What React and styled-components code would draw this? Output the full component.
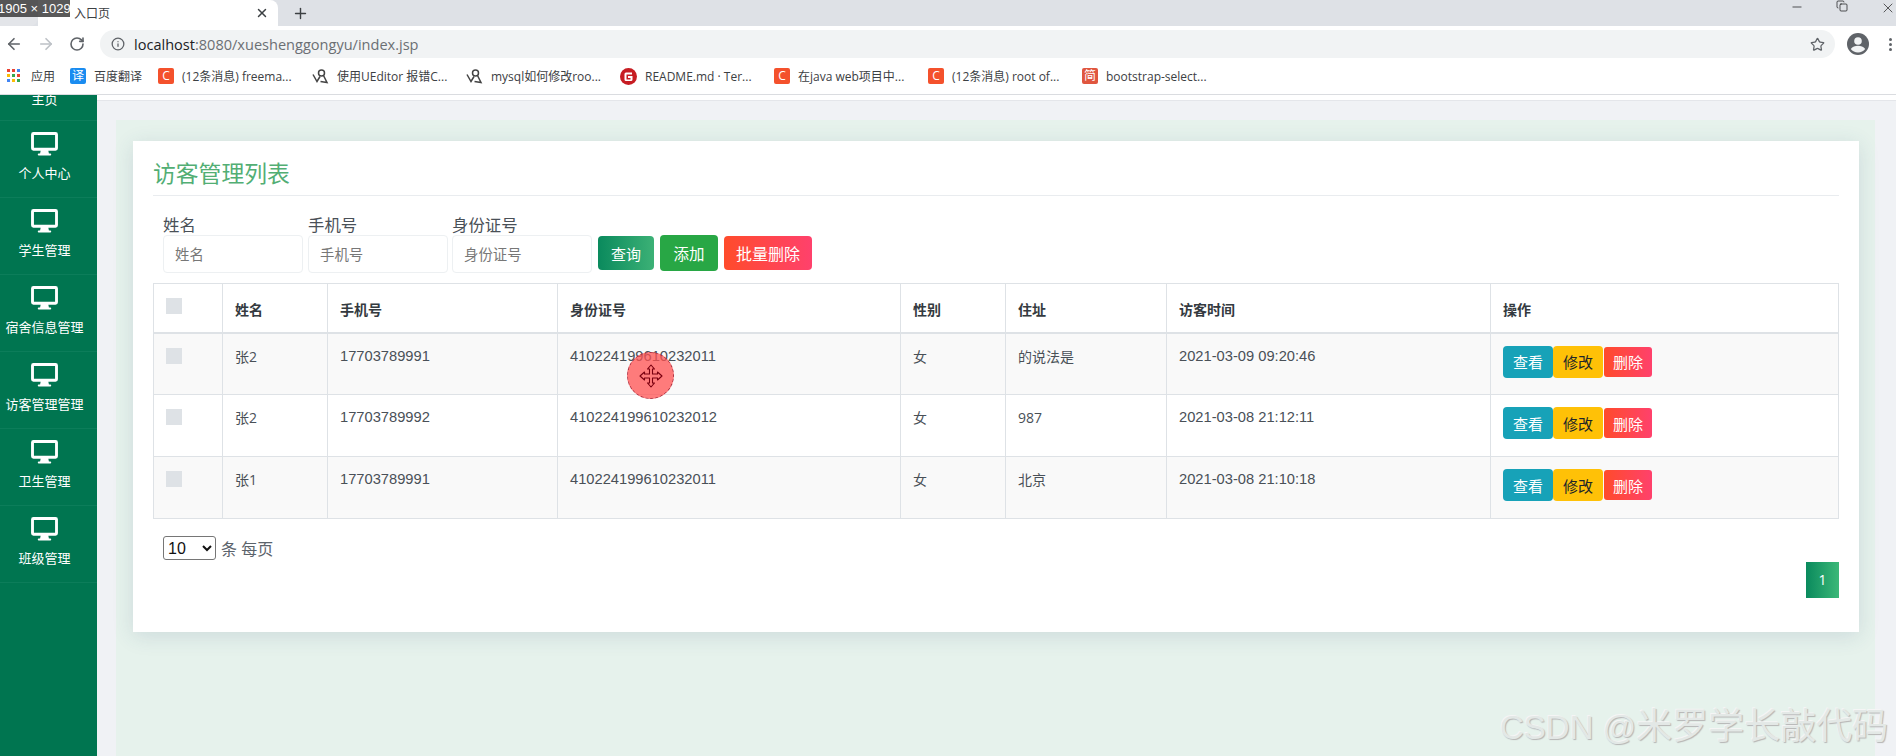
import styled, { createGlobalStyle } from "styled-components";
import { ArrowLeft, ArrowRight, RotateCw, Info, Star, Plus, X, Minus, Copy } from "lucide-react";

const GlobalStyle = createGlobalStyle`
  html, body {
    margin: 0;
    padding: 0;
    height: 756px;
    overflow: hidden;
    background: #f0f2f5;
    font-family: "Open Sans", "Noto Sans CJK SC", sans-serif;
  }
  * { box-sizing: border-box; }
`;

const bookmarks = [
  { kind: "apps", text: "应用" },
  { kind: "yi", text: "百度翻译" },
  { kind: "c", text: "(12条消息) freema..." },
  { kind: "ue", text: "使用UEditor 报错C..." },
  { kind: "ue", text: "mysql如何修改roo..." },
  { kind: "g", text: "README.md · Ter..." },
  { kind: "c", text: "在java web项目中..." },
  { kind: "c", text: "(12条消息) root of..." },
  { kind: "jian", text: "bootstrap-select..." },
];

const menu = ["主页", "个人中心", "学生管理", "宿舍信息管理", "访客管理管理", "卫生管理", "班级管理"];

const rows = [
  { name: "张2", phone: "17703789991", id: "410224199610232011", sex: "女", addr: "的说法是", time: "2021-03-09 09:20:46" },
  { name: "张2", phone: "17703789992", id: "410224199610232012", sex: "女", addr: "987", time: "2021-03-08 21:12:11" },
  { name: "张1", phone: "17703789991", id: "410224199610232011", sex: "女", addr: "北京", time: "2021-03-08 21:10:18" },
];

const colWidths = [69, 105, 230, 343, 105, 161, 324, 348];

function MonitorIcon() {
  return (
    <svg width="27" height="24" viewBox="0 0 28 25" fill="#fff">
      <path fillRule="evenodd" d="M2.5 0h23A2.5 2.5 0 0 1 28 2.5v14.5a2.5 2.5 0 0 1-2.5 2.5H18l.6 3H20a1 1 0 0 1 0 2H8a1 1 0 0 1 0-2h1.400l.6-3H2.500A2.500 2.500 0 0 1 0 17V2.500A2.500 2.500 0 0 1 2.500 0zM3 3v13.500h22V3z" />
    </svg>
  );
}

function BookmarkIcon({ kind }) {
  if (kind === "apps") {
    const colors = ["#ea4335", "#ea4335", "#4285f4", "#fbbc05", "#34a853", "#ea4335", "#4285f4", "#fbbc05", "#34a853"];
    return (
      <AppsGrid>
        {colors.map((c, i) => (
          <AppsDot key={i} $color={c} />
        ))}
      </AppsGrid>
    );
  }
  if (kind === "yi") return <Favicon $bg="#1a8cf0">译</Favicon>;
  if (kind === "c") return <Favicon $bg="#f4512c">C</Favicon>;
  if (kind === "jian") return <Favicon $bg="#e0563f">简</Favicon>;
  if (kind === "g") {
    return (
      <svg width="17" height="17" viewBox="0 0 17 17">
        <circle cx="8.500" cy="8.500" r="8.500" fill="#c71d23" />
        <path d="M12.500 8h-4.500v2h2.500v1.500h-4v-5h5.500V4.500H6a1.500 1.500 0 0 0-1.500 1.500v5.500A1.500 1.500 0 0 0 6 13h5a1.500 1.500 0 0 0 1.500-1.500z" fill="#fff" />
      </svg>
    );
  }
  return (
    <svg width="17" height="17" viewBox="0 0 17 17" fill="none" stroke="#444" strokeWidth="1.500">
      <circle cx="9.500" cy="5" r="3" />
      <path d="M1 6.500L5 13.500 8 8.500M11.500 7.500L15 14.500 8.500 13.500" />
    </svg>
  );
}

function MoveCursor() {
  return (
    <svg width="24" height="24" viewBox="0 0 24 24" fill="none" stroke="#7a0010" strokeWidth="1.100" strokeLinejoin="round">
      <path d="M12 1l3.500 4H13.500v5h5V8l4.500 4-4.500 4v-2h-5v5h2L12 23l-3.500-4h2v-5h-5v2L1 12l4.500-4v2h5V5h-2z" />
    </svg>
  );
}

function App() {
  return (
    <Page>
      <GlobalStyle />
      <TabStrip>
        <PrevTab />
        <ActiveTab>
          <TabTitle>入口页</TabTitle>
          <X size={14} strokeWidth={2.500} color="#3c4043" />
        </ActiveTab>
        <NewTab>
          <Plus size={17} strokeWidth={2} color="#3c4043" />
        </NewTab>
        <WindowControls>
          <Minus size={14} strokeWidth={1.200} color="#111" />
          <Copy size={12} strokeWidth={1.400} color="#111" />
          <X size={16} strokeWidth={1} color="#111" />
        </WindowControls>
      </TabStrip>
      <Toolbar>
        <NavButtons>
          <ArrowLeft size={18} strokeWidth={2.200} color="#5f6368" />
          <ArrowRight size={18} strokeWidth={2.200} color="#bdc1c6" />
          <RotateCw size={16} strokeWidth={2.400} color="#5f6368" />
        </NavButtons>
        <AddressBar>
          <Info size={14} strokeWidth={2.200} color="#5f6368" />
          <Url>
            <UrlHost>localhost</UrlHost>:8080/xueshenggongyu/index.jsp
          </Url>
          <Star size={15} strokeWidth={2} color="#5f6368" />
        </AddressBar>
        <Avatar>
          <svg width="22" height="22" viewBox="0 0 22 22">
            <circle cx="11" cy="11" r="11" fill="#5f6368" />
            <circle cx="11" cy="8" r="3.800" fill="#f1f3f4" />
            <path d="M3.800 16c1.500-2.500 4.500-3.200 7.200-3.200s5.700.7 7.200 3.200c-1.700 2.200-4.300 3.500-7.200 3.500s-5.500-1.300-7.200-3.500z" fill="#f1f3f4" />
          </svg>
        </Avatar>
        <Kebab>
          <KebabDot />
          <KebabDot />
          <KebabDot />
        </Kebab>
      </Toolbar>
      <BookmarkBar>
        {bookmarks.map((b) => (
          <Bookmark key={b.text}>
            <BookmarkIcon kind={b.kind} />
            <BookmarkText>{b.text}</BookmarkText>
          </Bookmark>
        ))}
      </BookmarkBar>

      <Body>
        <Sidebar>
          {menu.map((m, i) => (
            <MenuItem key={m} $clipped={i === 0}>
              <MonitorIcon />
              <MenuText>{m}</MenuText>
            </MenuItem>
          ))}
        </Sidebar>
        <Main>
          <TopStrip />
          <Panel>
            <Card>
              <Title>访客管理列表</Title>
              <SearchForm>
                <Field $gap={5}>
                  <FieldLabel>姓名</FieldLabel>
                  <TextInput placeholder="姓名" />
                </Field>
                <Field $gap={4}>
                  <FieldLabel>手机号</FieldLabel>
                  <TextInput placeholder="手机号" />
                </Field>
                <Field $gap={6}>
                  <FieldLabel>身份证号</FieldLabel>
                  <TextInput placeholder="身份证号" />
                </Field>
                <SearchButton $w={56} $fs={15} $bg="linear-gradient(to right, #0a8a5d, #3cb176)">查询</SearchButton>
                <SearchButton $w={58} $fs={15.500} $tall $bg="#28a745">添加</SearchButton>
                <SearchButton $w={88} $fs={16} $bg="linear-gradient(to right, #ff4b2b, #ff416c)">批量删除</SearchButton>
              </SearchForm>
              <Table>
                <colgroup>
                  {colWidths.map((w, i) => (
                    <col key={i} style={{ width: w }} />
                  ))}
                </colgroup>
                <thead>
                  <tr>
                    <Th $top><Check type="checkbox" /></Th>
                    <Th>姓名</Th>
                    <Th>手机号</Th>
                    <Th>身份证号</Th>
                    <Th>性别</Th>
                    <Th>住址</Th>
                    <Th>访客时间</Th>
                    <Th>操作</Th>
                  </tr>
                </thead>
                <tbody>
                  {rows.map((r, i) => (
                    <Row key={i} $striped={i % 2 === 0}>
                      <Td><Check type="checkbox" /></Td>
                      <Td>{r.name}</Td>
                      <Td $num>{r.phone}</Td>
                      <Td $num>{r.id}</Td>
                      <Td>{r.sex}</Td>
                      <Td>{r.addr}</Td>
                      <Td $num>{r.time}</Td>
                      <Td>
                        <Actions>
                          <ActionButton $bg="#17a2b8" $color="#fff">查看</ActionButton>
                          <ActionButton $bg="#ffc107" $color="#212529">修改</ActionButton>
                          <DeleteButton>删除</DeleteButton>
                        </Actions>
                      </Td>
                    </Row>
                  ))}
                </tbody>
              </Table>
              <PageSize>
                <SizeSelect defaultValue="10">
                  <option value="10">10</option>
                  <option value="20">20</option>
                </SizeSelect>
                <span>条 每页</span>
              </PageSize>
              <Pagination>
                <PageNumber>1</PageNumber>
              </Pagination>
            </Card>
          </Panel>
        </Main>
      </Body>

      <SizeLabel>1905 × 1029</SizeLabel>
      <CursorDot>
        <MoveCursor />
      </CursorDot>
      <Watermark>
        <WatermarkLatin>CSDN @</WatermarkLatin>米罗学长敲代码
      </Watermark>
    </Page>
  );
}

const Page = styled.div`
  position: relative;
  width: 1896px;
  height: 756px;
  overflow: hidden;
  display: flex;
  flex-direction: column;
`;

const TabStrip = styled.div`
  height: 26px;
  background: #dee1e6;
  display: flex;
  align-items: stretch;
  flex: none;
`;

const PrevTab = styled.div`
  width: 38px;
  background: #e3e5e9;
  border-bottom-right-radius: 8px;
`;

const ActiveTab = styled.div`
  width: 240px;
  background: #fff;
  border-top-right-radius: 8px;
  display: flex;
  align-items: center;
  justify-content: space-between;
  padding: 0 9px 0 36px;
`;

const TabTitle = styled.span`
  font-size: 12px;
  color: #3c4043;
`;

const NewTab = styled.div`
  width: 44px;
  display: flex;
  align-items: center;
  justify-content: center;
`;

const WindowControls = styled.div`
  margin-left: auto;
  width: 106px;
  display: flex;
  justify-content: space-between;
  align-items: flex-start;
`;

const Toolbar = styled.div`
  height: 32px;
  background: #fff;
  flex: none;
  display: flex;
  align-items: flex-end;
`;

const NavButtons = styled.div`
  width: 100px;
  height: 28px;
  padding-left: 5px;
  display: flex;
  align-items: center;
  gap: 14px;
`;

const AddressBar = styled.div`
  width: 1735px;
  height: 28px;
  background: #f1f3f4;
  border-radius: 14px;
  display: flex;
  align-items: center;
  padding: 0 10px 0 11px;
`;

const Url = styled.span`
  margin-left: 9px;
  flex: 1;
  font-size: 14.560px;
  color: #6b6f73;
`;

const UrlHost = styled.span`
  color: #202124;
`;

const Avatar = styled.div`
  width: 22px;
  height: 22px;
  margin: 0 0 3px 12px;
`;

const Kebab = styled.div`
  margin: 0 0 7px 20px;
  display: flex;
  flex-direction: column;
  gap: 2px;
`;

const KebabDot = styled.i`
  width: 3px;
  height: 3px;
  border-radius: 50%;
  background: #5f6368;
`;

const BookmarkBar = styled.div`
  height: 37px;
  background: #fff;
  border-bottom: 1px solid #dadce0;
  flex: none;
  display: grid;
  grid-template-columns: 63px 88px repeat(7, 154px);
  padding-left: 7px;
  align-items: center;
`;

const Bookmark = styled.div`
  display: flex;
  align-items: center;
  gap: 8px;
  min-width: 0;
`;

const BookmarkText = styled.span`
  font-size: 12px;
  color: #3c4043;
  white-space: nowrap;
`;

const AppsGrid = styled.div`
  width: 14px;
  height: 14px;
  display: grid;
  grid-template-columns: repeat(3, 3px);
  grid-auto-rows: 3px;
  gap: 2px;
  margin-right: 2px;
`;

const AppsDot = styled.i`
  background: ${(p) => p.$color};
`;

const Favicon = styled.span`
  width: 16px;
  height: 16px;
  flex: none;
  background: ${(p) => p.$bg};
  border-radius: 2px;
  color: #fff;
  font-size: 12px;
  line-height: 16px;
  text-align: center;
`;

const Body = styled.div`
  flex: 1;
  display: flex;
  min-height: 0;
`;

const Sidebar = styled.aside`
  width: 97px;
  flex: none;
  background: #007550;
  overflow: hidden;
  display: flex;
  flex-direction: column;
`;

const MenuItem = styled.div`
  height: ${(p) => (p.$clipped ? "26px" : "77px")};
  flex: none;
  display: flex;
  flex-direction: column;
  align-items: center;
  justify-content: ${(p) => (p.$clipped ? "flex-end" : "flex-start")};
  padding: ${(p) => (p.$clipped ? "0 8px 12px 0" : "11px 8px 0 0")};
  border-bottom: 1px solid #0c7d5a;
  color: #fff;

  svg {
    flex: none;
  }
`;

const MenuText = styled.span`
  margin-top: 8px;
  font-size: 13px;
  line-height: 18px;
  white-space: nowrap;
`;

const Main = styled.main`
  flex: 1;
  display: flex;
  flex-direction: column;
  min-width: 0;
`;

const TopStrip = styled.div`
  height: 6px;
  background: #fff;
  border-bottom: 1px solid #e4e6ea;
  flex: none;
`;

const Panel = styled.div`
  flex: 1;
  margin: 19px 21px 0 19px;
  padding: 21px 16px 0 17px;
  background: #e6f2ec;
`;

const Card = styled.section`
  height: 491px;
  background: #fff;
  padding: 16px 20px 0;
  box-shadow: 0 4px 20px rgba(50, 80, 120, 0.14);
`;

const Title = styled.h2`
  margin: 0;
  height: 39px;
  border-bottom: 1px solid #e9ecef;
  font-size: 22.800px;
  line-height: 34px;
  font-weight: 400;
  color: #52ae74;
`;

const SearchForm = styled.div`
  display: flex;
  align-items: flex-end;
  margin: 18px 0 0 10px;
  height: 59px;
`;

const Field = styled.label`
  width: 140px;
  margin-right: ${(p) => p.$gap}px;
  display: flex;
  flex-direction: column;
`;

const FieldLabel = styled.span`
  font-size: 16.400px;
  line-height: 21px;
  color: #495057;
`;

const TextInput = styled.input`
  height: 38px;
  width: 140px;
  border: 1px solid #edf0f2;
  border-radius: 4px;
  padding: 0 11px;
  font-size: 14.400px;
  font-family: inherit;
  outline: none;

  &::placeholder {
    color: #777;
  }
`;

const SearchButton = styled.button`
  width: ${(p) => p.$w}px;
  height: ${(p) => (p.$tall ? 36 : 34)}px;
  margin: 0 6px ${(p) => (p.$tall ? 2 : 3)}px 0;
  padding: 0;
  border: 0;
  border-radius: 4px;
  background: ${(p) => p.$bg};
  color: #fff;
  font-size: ${(p) => p.$fs}px;
  font-family: inherit;
`;

const Table = styled.table`
  width: 1686px;
  margin-top: 10px;
  table-layout: fixed;
  border-collapse: collapse;
  font-size: 14px;
  color: #495057;
`;

const Th = styled.th`
  height: 49px;
  border: 1px solid #dee2e6;
  border-bottom-width: 2px;
  padding: 12px;
  text-align: left;
  vertical-align: ${(p) => (p.$top ? "top" : "bottom")};
  font-size: 14px;
  line-height: 21px;
  font-weight: 700;
  color: #343a40;
`;

const Row = styled.tr`
  background: ${(p) => (p.$striped ? "#f9f9f9" : "#fff")};
`;

const Td = styled.td`
  height: 62px;
  border: 1px solid #dee2e6;
  padding: 12px;
  vertical-align: top;
  line-height: 21px;
  font-size: ${(p) => (p.$num ? "14.700px" : "14px")};
  font-family: ${(p) => (p.$num ? '"Liberation Sans", sans-serif' : "inherit")};
`;

const Actions = styled.div`
  display: flex;
  align-items: center;
`;

const ActionButton = styled.button`
  width: 50px;
  height: 32px;
  padding: 0;
  border: 0;
  border-radius: 4px;
  background: ${(p) => p.$bg};
  color: ${(p) => p.$color};
  font-size: 15px;
  font-family: inherit;
`;

const DeleteButton = styled.button`
  width: 48px;
  height: 30px;
  margin-left: 1px;
  padding: 0;
  border: 0;
  border-radius: 3px;
  background: linear-gradient(to right, #ff4b2b, #ff416c);
  color: #fff;
  font-size: 15px;
  font-family: inherit;
`;

const Check = styled.input`
  appearance: none;
  display: block;
  width: 16px;
  height: 16px;
  margin: 2px 0 0 0;
  background: #dee2e6;
  border: 0;
`;

const PageSize = styled.div`
  display: flex;
  align-items: center;
  gap: 5px;
  margin: 17px 0 0 10px;
  font-size: 16px;
  color: #5b636b;
`;

const SizeSelect = styled.select`
  width: 53px;
  height: 24px;
  font-size: 16px;
  font-family: "Liberation Sans", sans-serif;
  background: #fff;
  color: #111;
  border: 1px solid #767676;
  border-radius: 3px;
`;

const Pagination = styled.div`
  display: flex;
  justify-content: flex-end;
  margin-top: 2px;
`;

const PageNumber = styled.span`
  width: 33px;
  height: 36px;
  background: linear-gradient(to right, #0a8a5d, #3cb878);
  color: #fff;
  font-size: 14px;
  line-height: 36px;
  text-align: center;
`;

const SizeLabel = styled.div`
  position: absolute;
  left: 0;
  top: 0;
  width: 70px;
  height: 17px;
  background: rgba(60, 60, 60, 0.85);
  color: #fff;
  font-size: 13px;
  line-height: 17px;
  text-indent: -2px;
  white-space: nowrap;
  overflow: hidden;
  font-family: "Liberation Sans", sans-serif;
`;

const CursorDot = styled.div`
  position: absolute;
  left: 627px;
  top: 352px;
  width: 47px;
  height: 47px;
  border-radius: 50%;
  background: rgba(255, 80, 80, 0.75);
  border: 1px dashed #b03040;
  display: flex;
  align-items: center;
  justify-content: center;
`;

const Watermark = styled.div`
  position: absolute;
  left: 1500px;
  top: 700px;
  font-family: "Noto Sans CJK SC", sans-serif;
  font-size: 36px;
  line-height: 46px;
  white-space: nowrap;
  color: #e3e8e6;
  text-shadow: 1px 1px 1px #b5b5b5, -1px -1px 0 #f5f5f5;
`;

const WatermarkLatin = styled.span`
  font-family: "Liberation Sans", sans-serif;
  font-size: 33px;
`;

export default App;
